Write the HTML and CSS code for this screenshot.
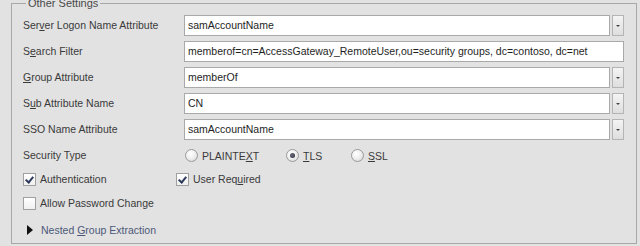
FILE: index.html
```html
<!DOCTYPE html>
<html>
<head>
<meta charset="utf-8">
<link rel="stylesheet" href="styles.css">
</head>
<body>
<fieldset class="group">
  <legend class="legend">Other Settings</legend>
  <div class="form">
    <div class="label">Ser<u>v</u>er Logon Name Attribute</div>
    <div class="combo"><div class="field">samAccountName</div><div class="btn"><span class="arrow"></span></div></div>

    <div class="label">S<u>e</u>arch Filter</div>
    <div class="field">memberof=cn=AccessGateway_RemoteUser,ou=security groups, dc=contoso, dc=net</div>

    <div class="label"><u>G</u>roup Attribute</div>
    <div class="combo"><div class="field">memberOf</div><div class="btn"><span class="arrow"></span></div></div>

    <div class="label">S<u>u</u>b Attribute Name</div>
    <div class="combo"><div class="field">CN</div><div class="btn"><span class="arrow"></span></div></div>

    <div class="label">SSO Name Attribute</div>
    <div class="combo"><div class="field">samAccountName</div><div class="btn"><span class="arrow"></span></div></div>

    <div class="label">Security Type</div>
    <div class="radios">
      <div class="opt w1"><span class="radio"></span><span>PLAINTE<u>X</u>T</span></div>
      <div class="opt w2"><span class="radio on"></span><span><u>T</u>LS</span></div>
      <div class="opt"><span class="radio"></span><span><u>S</u>SL</span></div>
    </div>
  </div>

  <div class="checks">
    <div class="opt"><span class="check on"></span><span>Authentication</span></div>
    <div class="opt"><span class="check on"></span><span>User Req<u>u</u>ired</span></div>
    <div class="opt"><span class="check"></span><span>Allow Password Change</span></div>
  </div>

  <div class="nested"><span class="tri"></span><span>Nested <u>G</u>roup Extraction</span></div>
</fieldset>
</body>
</html>
```
FILE: styles.css
```css
html, body {
  margin: 0;
  padding: 0;
  background: #e2e2e2;
  width: 640px;
  height: 246px;
  overflow: hidden;
  font-family: "Liberation Sans", Arial, sans-serif;
  font-size: 10.5px;
  color: #3a3a3a;
}

.group {
  margin: -4px 3px 0 11px;
  padding: 5px 12px 3px 11px;
  border: 1px solid #a8a8a8;
  min-width: 0;
}

.legend {
  padding: 0 2px;
  margin-left: 3px;
  line-height: 14px;
  color: #4a4a4a;
  font-size: 11px;
}

.form {
  display: grid;
  grid-template-columns: 161px 1fr;
  row-gap: 5px;
  align-items: center;
}

.label {
  line-height: 21px;
}

.combo {
  display: flex;
  gap: 2px;
}

.combo .field {
  flex: 1;
}

.field {
  height: 19px;
  line-height: 19px;
  border: 1px solid #a9a9a9;
  background: #ffffff;
  padding-left: 3px;
  color: #1e1e1e;
  white-space: nowrap;
  overflow: hidden;
}

.btn {
  width: 10px;
  height: 19px;
  border: 1px solid #b4b4b4;
  background: linear-gradient(#f4f4f4, #dedede);
  display: flex;
  align-items: center;
  justify-content: center;
}

.arrow {
  width: 0;
  height: 0;
  border-left: 2px solid transparent;
  border-right: 2px solid transparent;
  border-top: 2px solid #444;
}

.radios {
  display: flex;
  align-items: center;
  height: 21px;
  padding-left: 1px;
}

.opt {
  display: flex;
  align-items: center;
  white-space: nowrap;
}

.w1 { width: 101px; }
.w2 { width: 65px; }

.radio {
  width: 11px;
  height: 11px;
  border-radius: 50%;
  border: 1px solid #9a9a9a;
  background: radial-gradient(circle at 40% 35%, #ffffff 0%, #f0f0f0 45%, #d2d2d2 100%);
  margin-right: 4px;
  position: relative;
  flex: none;
}

.radio.on::after {
  content: "";
  position: absolute;
  left: 3px;
  top: 3px;
  width: 5px;
  height: 5px;
  border-radius: 50%;
  background: radial-gradient(circle at 40% 40%, #6a6a7a, #2a2a3a);
}

.checks {
  display: grid;
  grid-template-columns: 153px 1fr;
  row-gap: 4px;
  margin-top: 3px;
}

.checks .opt {
  height: 20px;
}

.check {
  width: 11px;
  height: 11px;
  border: 1px solid #a0a0a0;
  background: linear-gradient(#ffffff, #f0f0f0);
  margin-right: 4px;
  position: relative;
  flex: none;
}

.check.on::after {
  content: "";
  position: absolute;
  left: 3px;
  top: 1px;
  width: 3px;
  height: 6px;
  border-right: 2px solid #2d3a5a;
  border-bottom: 2px solid #2d3a5a;
  transform: rotate(40deg);
}

.nested {
  display: flex;
  align-items: center;
  height: 20px;
  margin-top: 7px;
  padding-left: 4px;
  color: #4c5878;
}

.tri {
  width: 0;
  height: 0;
  border-top: 5px solid transparent;
  border-bottom: 5px solid transparent;
  border-left: 6px solid #111;
  margin-right: 8px;
}
```
